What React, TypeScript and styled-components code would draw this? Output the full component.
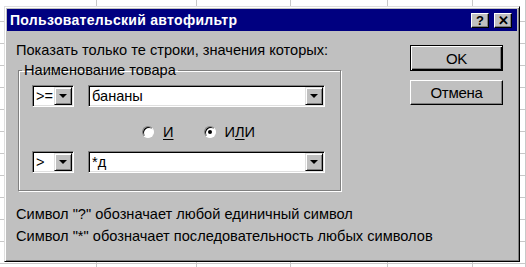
import React from 'react';
import styled, { createGlobalStyle } from 'styled-components';

const GlobalStyle = createGlobalStyle`
	html, body {
		margin: 0;
		padding: 0;
		background: #ffffff;
	}
	body {
		font-family: 'Liberation Sans', Arial, sans-serif;
	}
`;

const Desktop = styled.div`
	position: relative;
	width: 526px;
	height: 267px;
	overflow: hidden;
	background: #ffffff;
`;

// spreadsheet behind the dialog
const Sheet = styled.div`
	display: flex;
	height: 100%;
	background-image: repeating-linear-gradient(
		to bottom,
		transparent 0,
		transparent 21px,
		#c8c8c8 21px,
		#c8c8c8 22px
	);
`;

const SheetColumn = styled.div<{ $w: number }>`
	flex: 0 0 ${p => p.$w}px;
	height: 100%;
	border-right: 1px solid #c8c8c8;
	box-sizing: border-box;
`;

const Window = styled.div`
	position: absolute;
	left: 4px;
	top: 6px;
	width: 516px;
	height: 256px;
	box-sizing: border-box;
	padding: 2px;
	background: #c0c0c0;
	border: 1px solid;
	border-color: #dfdfdf #000000 #000000 #dfdfdf;
	box-shadow: inset 1px 1px 0 #ffffff, inset -1px -1px 0 #808080;
	display: flex;
	flex-direction: column;
`;

const TitleBar = styled.div`
	height: 22px;
	background: #000080;
	display: flex;
	align-items: center;
	padding: 0 5px 0 3px;
	gap: 5px;
`;

const Title = styled.span`
	flex: 1;
	color: #ffffff;
	font-weight: bold;
	font-size: 14px;
	letter-spacing: 0.3px;
`;

const CaptionButton = styled.div`
	width: 18px;
	height: 15px;
	box-sizing: border-box;
	background: #c0c0c0;
	border: 1px solid;
	border-color: #ffffff #000000 #000000 #ffffff;
	box-shadow: inset -1px -1px 0 #808080;
	display: flex;
	align-items: center;
	justify-content: center;
	font-weight: bold;
	font-size: 13px;
	color: #000;
	line-height: 1;
`;

const Body = styled.div`
	flex: 1;
	display: grid;
	grid-template-columns: 374px 93px;
	column-gap: 20px;
	padding: 11px 0 0 9px;
	font-size: 14.6px;
	color: #000;
`;

const LeftColumn = styled.div`
	display: flex;
	flex-direction: column;
	min-width: 0;
`;

const Prompt = styled.div`
	line-height: 16px;
	white-space: nowrap;
`;

const Group = styled.fieldset`
	margin: 4px 0 0 2px;
	width: 323px;
	box-sizing: border-box;
	padding: 7px 0 17px 13px;
	border: 1px solid #808080;
	box-shadow: inset 1px 1px 0 #ffffff, 1px 1px 0 #ffffff;
`;

const GroupLabel = styled.legend`
	padding: 0 2px;
	margin-left: -10px;
	line-height: 16px;
	font-size: 14.6px;
`;

const ConditionRow = styled.div`
	display: flex;
	gap: 14px;
	height: 22px;
`;

const Field = styled.div<{ $w: number }>`
	width: ${p => p.$w}px;
	height: 22px;
	box-sizing: border-box;
	background: #ffffff;
	border: 1px solid;
	border-color: #808080 #ffffff #ffffff #808080;
	box-shadow: inset 1px 1px 0 #000000, inset -1px -1px 0 #dfdfdf;
	display: flex;
	align-items: center;
	padding: 1px 1px 1px 3px;
`;

const FieldText = styled.span`
	flex: 1;
	font-size: 14.6px;
	line-height: 16px;
	white-space: nowrap;
	overflow: hidden;
`;

const DropButton = styled.div`
	flex: 0 0 18px;
	height: 18px;
	box-sizing: border-box;
	background: #c0c0c0;
	border: 1px solid;
	border-color: #dfdfdf #000000 #000000 #dfdfdf;
	box-shadow: inset 1px 1px 0 #ffffff, inset -1px -1px 0 #808080;
	display: flex;
	align-items: center;
	justify-content: center;
`;

const Arrow = styled.span`
	width: 0;
	height: 0;
	border-left: 4px solid transparent;
	border-right: 4px solid transparent;
	border-top: 4px solid #000;
`;

const RadioRow = styled.div`
	display: flex;
	align-items: center;
	height: 16px;
	margin: 17px 0 11px 110px;
	gap: 30px;
`;

const RadioItem = styled.label`
	display: flex;
	align-items: center;
	gap: 9px;
	line-height: 16px;
`;

const RadioCircle = styled.span<{ $checked?: boolean }>`
	width: 12px;
	height: 12px;
	box-sizing: border-box;
	border-radius: 50%;
	background: #ffffff;
	border: 1px solid;
	border-color: #808080 #ffffff #ffffff #808080;
	box-shadow: inset 1px 1px 0 #000000;
	display: flex;
	align-items: center;
	justify-content: center;

	&::after {
		content: '';
		width: 4px;
		height: 4px;
		border-radius: 50%;
		background: ${p => (p.$checked ? '#000' : 'transparent')};
	}
`;

const Hotkey = styled.u`
	text-decoration-thickness: 1px;
	text-underline-offset: 2px;
`;

const Hints = styled.div`
	margin-top: 12px;
	line-height: 22px;
	white-space: nowrap;
`;

const RightColumn = styled.div`
	display: flex;
	flex-direction: column;
	gap: 9px;
	padding-top: 3px;
`;

const Button = styled.div<{ $default?: boolean }>`
	height: ${p => (p.$default ? 26 : 25)}px;
	box-sizing: border-box;
	background: #c0c0c0;
	display: flex;
	align-items: center;
	justify-content: center;
	font-size: 15px;
	letter-spacing: -0.3px;
	border: 1px solid;
	border-color: ${p => (p.$default ? '#000000' : '#ffffff #000000 #000000 #ffffff')};
	box-shadow: ${p =>
		p.$default
			? 'inset 1px 1px 0 #ffffff, inset -1px -1px 0 #000000, inset -2px -2px 0 #808080'
			: 'inset -1px -1px 0 #808080'};
`;

const Combo: React.FC<{ width: number; value: string }> = ({ width, value }) => (
	<Field $w={width}>
		<FieldText>{value}</FieldText>
		<DropButton>
			<Arrow />
		</DropButton>
	</Field>
);

const sheetColumns = [97, 100, 94, 97, 85, 53];

export default function App() {
	return (
		<>
			<GlobalStyle />
			<Desktop>
				<Sheet>
					{sheetColumns.map((w, i) => (
						<SheetColumn key={i} $w={w} />
					))}
				</Sheet>
				<Window>
					<TitleBar>
						<Title>Пользовательский автофильтр</Title>
						<CaptionButton>?</CaptionButton>
						<CaptionButton>✕</CaptionButton>
					</TitleBar>
					<Body>
						<LeftColumn>
							<Prompt>Показать только те строки, значения которых:</Prompt>
							<Group>
								<GroupLabel>Наименование товара</GroupLabel>
								<ConditionRow>
									<Combo width={42} value=">=" />
									<Combo width={237} value="бананы" />
								</ConditionRow>
								<RadioRow>
									<RadioItem>
										<RadioCircle />
										<Hotkey>И</Hotkey>
									</RadioItem>
									<RadioItem>
										<RadioCircle $checked />
										<span>
											И<Hotkey>Л</Hotkey>И
										</span>
									</RadioItem>
								</RadioRow>
								<ConditionRow>
									<Combo width={42} value=">" />
									<Combo width={237} value="*д" />
								</ConditionRow>
							</Group>
							<Hints>
								<div>Символ "?" обозначает любой единичный символ</div>
								<div>Символ "*" обозначает последовательность любых символов</div>
							</Hints>
						</LeftColumn>
						<RightColumn>
							<Button $default>OK</Button>
							<Button>Отмена</Button>
						</RightColumn>
					</Body>
				</Window>
			</Desktop>
		</>
	);
}
